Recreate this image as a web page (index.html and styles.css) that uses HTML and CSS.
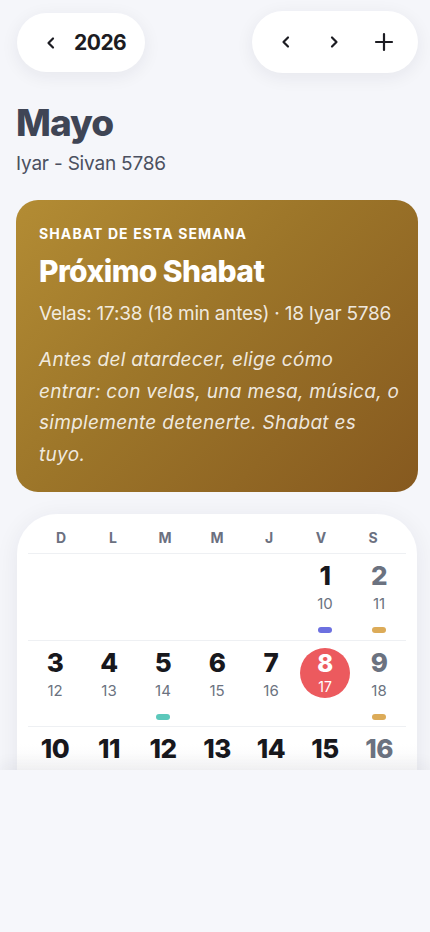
FILE: index.html
```html
<!DOCTYPE html>
<html lang="es">
<head>
<meta charset="utf-8">
<meta name="viewport" content="width=430, initial-scale=1">
<link rel="stylesheet" href="styles.css">
</head>
<body>
<div class="page">
  <header class="topbar">
    <div class="pill year-pill">
      <svg class="chev" width="14" height="14" viewBox="0 0 14 14"><path d="M9 2.5 L4.5 7 L9 11.5" fill="none" stroke="#1c1c22" stroke-width="2.2" stroke-linecap="round" stroke-linejoin="round"/></svg>
      <span class="year">2026</span>
    </div>
    <div class="pill nav-pill">
      <svg width="14" height="14" viewBox="0 0 14 14"><path d="M9 2.5 L4.5 7 L9 11.5" fill="none" stroke="#1c1c22" stroke-width="2.2" stroke-linecap="round" stroke-linejoin="round"/></svg>
      <svg width="14" height="14" viewBox="0 0 14 14"><path d="M5 2.5 L9.5 7 L5 11.5" fill="none" stroke="#1c1c22" stroke-width="2.2" stroke-linecap="round" stroke-linejoin="round"/></svg>
      <svg width="20" height="20" viewBox="0 0 20 20"><path d="M10 2 V18 M2 10 H18" fill="none" stroke="#1c1c22" stroke-width="2.2" stroke-linecap="round"/></svg>
    </div>
  </header>

  <section class="heading">
    <h1 class="month">Mayo</h1>
    <p class="hebrew">Iyar - Sivan 5786</p>
  </section>

  <section class="shabbat">
    <div class="eyebrow">SHABAT DE ESTA SEMANA</div>
    <h2 class="sh-title">Próximo Shabat</h2>
    <div class="sh-times">Velas: 17:38 (18 min antes) · 18 Iyar 5786</div>
    <p class="sh-text">Antes del atardecer, elige cómo entrar: con velas, una mesa, música, o simplemente detenerte. Shabat es tuyo.</p>
  </section>

  <section class="calendar">
    <div class="weekdays">
      <span>D</span><span>L</span><span>M</span><span>M</span><span>J</span><span>V</span><span>S</span>
    </div>
    <div class="week">
      <div class="day empty"></div>
      <div class="day empty"></div>
      <div class="day empty"></div>
      <div class="day empty"></div>
      <div class="day empty"></div>
      <div class="day"><span class="num">1</span><span class="heb">10</span><span class="dot violet"></span></div>
      <div class="day sat"><span class="num">2</span><span class="heb">11</span><span class="dot gold"></span></div>
    </div>
    <div class="week">
      <div class="day"><span class="num">3</span><span class="heb">12</span></div>
      <div class="day"><span class="num">4</span><span class="heb">13</span></div>
      <div class="day"><span class="num">5</span><span class="heb">14</span><span class="dot teal"></span></div>
      <div class="day"><span class="num">6</span><span class="heb">15</span></div>
      <div class="day"><span class="num">7</span><span class="heb">16</span></div>
      <div class="day today"><span class="circle"><span class="num">8</span><span class="heb">17</span></span></div>
      <div class="day sat"><span class="num">9</span><span class="heb">18</span><span class="dot gold"></span></div>
    </div>
    <div class="week">
      <div class="day"><span class="num">10</span><span class="heb">19</span></div>
      <div class="day"><span class="num">11</span><span class="heb">20</span></div>
      <div class="day"><span class="num">12</span><span class="heb">21</span></div>
      <div class="day"><span class="num">13</span><span class="heb">22</span></div>
      <div class="day"><span class="num">14</span><span class="heb">23</span></div>
      <div class="day"><span class="num">15</span><span class="heb">24</span></div>
      <div class="day sat"><span class="num">16</span><span class="heb">25</span></div>
    </div>
  </section>
</div>
<div class="bottom-panel"></div>
</body>
</html>
```

FILE: styles.css
```css
* { box-sizing: border-box; }
html, body { margin: 0; padding: 0; }
body {
  background: #f5f6fa;
  font-family: "Inter", "Noto Sans", sans-serif;
  color: #1c1c22;
  width: 430px;
  height: 932px;
  overflow: hidden;
}
.page { padding: 0 12px 0 16px; }

.topbar {
  display: flex;
  justify-content: space-between;
  align-items: flex-start;
  padding-top: 11px;
}
.pill {
  background: #fff;
  border-radius: 32px;
  box-shadow: 0 4px 18px rgba(30, 35, 60, 0.07);
  display: flex;
  align-items: center;
}
.year-pill {
  margin-top: 2px;
  margin-left: 1px;
  width: 128px;
  height: 59px;
  padding-left: 27px;
  gap: 16px;
}
.year {
  font-size: 21px;
  font-weight: 700;
  letter-spacing: -0.5px;
}
.nav-pill {
  width: 166px;
  height: 62px;
  padding: 0 24px 0 27px;
  justify-content: space-between;
}

.heading { margin-top: 27px; }
.month {
  margin: 0;
  font-size: 37px;
  font-weight: 800;
  color: #3f4555;
  line-height: 46px;
  letter-spacing: -1px;
}
.hebrew {
  margin: 5px 0 0;
  font-size: 19px;
  color: #4b5060;
  line-height: 26px;
  letter-spacing: -0.2px;
}

.shabbat {
  margin-top: 23px;
  border-radius: 22px;
  background: linear-gradient(135deg, #b38c34 0%, #9c7529 45%, #86591f 100%);
  padding: 25px 18px 22px 23px;
  color: #fff;
  height: 292px;
}
.eyebrow {
  font-size: 14px;
  font-weight: 700;
  letter-spacing: 1.1px;
  line-height: 18px;
}
.sh-title {
  margin: 9px 0 0;
  font-size: 30px;
  font-weight: 800;
  letter-spacing: -0.6px;
  line-height: 38px;
}
.sh-times {
  margin-top: 12px;
  font-size: 19px;
  color: rgba(255,255,255,0.86);
  line-height: 24px;
  letter-spacing: -0.25px;
  white-space: nowrap;
}
.sh-text {
  margin: 18px 0 0;
  font-size: 19px;
  font-style: italic;
  line-height: 31.6px;
  color: rgba(255,255,255,0.86);
  letter-spacing: 0.3px;
}

.calendar {
  margin: 22px 1px 0;
  background: linear-gradient(#fff 0, #fff 230px, #f8f8f9 257px);
  border-radius: 40px 40px 0 0;
  box-shadow: 0 4px 24px rgba(30, 35, 60, 0.07);
  padding: 14px 11px 0;
  height: 300px;
}
.weekdays {
  display: grid;
  grid-template-columns: repeat(7, 1fr);
  padding: 0 7px;
  height: 26px;
  border-bottom: 1.5px solid #eef0f3;
}
.weekdays span {
  text-align: center;
  font-size: 14px;
  font-weight: 700;
  color: #6b7080;
  line-height: 20px;
}
.week {
  display: grid;
  grid-template-columns: repeat(7, 1fr);
  height: 86.5px;
  border-bottom: 1.5px solid #eef0f3;
}
.day {
  display: flex;
  flex-direction: column;
  align-items: center;
  padding-top: 7px;
}
.num {
  font-size: 26px;
  font-weight: 800;
  line-height: 30px;
  color: #18181d;
  letter-spacing: -0.5px;
}
.heb {
  margin-top: 4px;
  font-size: 15px;
  line-height: 18px;
  color: #6b7280;
}
.sat .num { color: #6b7280; }
.dot {
  margin-top: 14px;
  width: 14px;
  height: 6px;
  border-radius: 3px;
}
.dot.violet { background: #6c70e0; }
.dot.gold { background: #dcab58; }
.dot.teal { background: #5cc8bb; }

.today { padding-top: 7px; }
.circle {
  width: 50px;
  height: 50px;
  border-radius: 50%;
  background: #ec5a5e;
  display: flex;
  flex-direction: column;
  align-items: center;
  padding-top: 1px;
}
.circle .num { color: #fff; line-height: 29px; font-size: 24px; }
.circle .heb { color: #fff; margin-top: 0; font-size: 14px; line-height: 17px; }

.bottom-panel {
  position: fixed;
  left: 0;
  right: 0;
  top: 770px;
  bottom: 0;
  background: #f6f7fb;
  box-shadow: 0 -6px 14px rgba(30, 35, 60, 0.05);
}
```
